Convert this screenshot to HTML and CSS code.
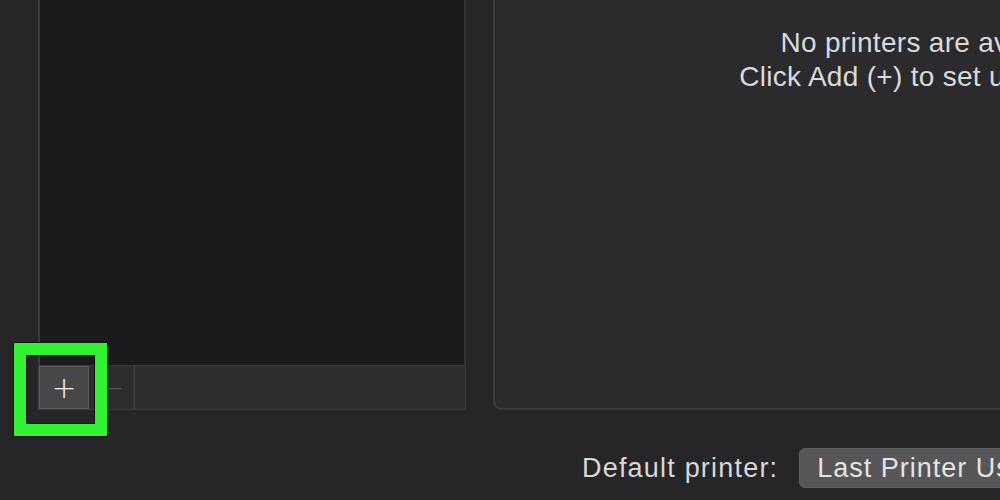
FILE: index.html
```html
<html lang="en">
<head>
<meta charset="utf-8">
<link rel="stylesheet" href="styles.css">
</head>
<body>
    <div class="window">
        <div class="top-row">
            <div class="list-column">
                <div class="printer-list"></div>
                <div class="list-toolbar">
                    <button class="tool-button add">+</button>
                    <button class="tool-button remove">&minus;</button>
                    <div class="tool-fill"></div>
                </div>
            </div>

            <div class="detail-panel">
                <p class="empty-text">No printers are available.<br>Click Add (+) to set up a printer.</p>
            </div>
        </div>

        <div class="bottom-row">
            <span class="default-label">Default printer:</span>
            <div class="popup">Last Printer Used</div>
        </div>
    </div>

    <div class="highlight"></div>
</body>
</html>
```

FILE: styles.css
```css
html, body {
    margin: 0;
    padding: 0;
}

body {
    width: 1000px;
    height: 500px;
    overflow: hidden;
    background-color: #262628;
    font-family: "Liberation Sans", Arial, sans-serif;
    color: #dcdcdc;
    position: relative;
}

.window {
    display: flex;
    flex-direction: column;
}

.top-row {
    display: flex;
    height: 410px;
}

.list-column {
    display: flex;
    flex-direction: column;
    width: 428px;
    margin-left: 38px;
    flex-shrink: 0;
}

.printer-list {
    height: 365px;
    background-color: #1b1b1d;
    border-left: 2px solid #3a3a3c;
    border-right: 2px solid #343436;
    box-sizing: border-box;
}

.list-toolbar {
    display: flex;
    height: 45px;
    background-color: #2d2d2f;
    border: 1px solid #3c3c3e;
    box-sizing: border-box;
}

.tool-button {
    width: 48px;
    height: 100%;
    margin: 0;
    padding: 0;
    border: none;
    border-right: 1px solid #4a4a4c;
    background-color: transparent;
    font-family: "DejaVu Sans", sans-serif;
    font-size: 30px;
    font-weight: 300;
    line-height: 1;
}

.tool-button.add {
    width: 50px;
    background-color: #474749;
    border: 1px solid #5c5c5e;
    color: #f2f2f2;
}

.tool-button.remove {
    width: 46px;
    color: #58585a;
}

.tool-fill {
    flex: 1;
}

.detail-panel {
    width: 894px;
    flex-shrink: 0;
    margin-left: 27px;
    background-color: #2b2b2d;
    border: 2px solid #3b3b3d;
    border-top: none;
    border-radius: 0 0 0 9px;
    box-sizing: border-box;
}

.empty-text {
    margin: 26px 0 0 0;
    text-align: center;
    font-size: 28px;
    line-height: 34px;
    letter-spacing: 0.3px;
    color: #dadada;
}

.bottom-row {
    display: flex;
    align-items: center;
    height: 90px;
    padding-left: 582px;
    padding-top: 26px;
    box-sizing: border-box;
    white-space: nowrap;
}

.default-label {
    flex-shrink: 0;
    font-size: 27px;
    letter-spacing: 1.2px;
    color: #d8d8d8;
}

.popup {
    margin-left: 21px;
    height: 40px;
    width: 300px;
    flex-shrink: 0;
    padding-left: 17px;
    background-color: #565658;
    border: 1px solid #5f5f61;
    border-radius: 6px;
    box-sizing: border-box;
    font-size: 27px;
    line-height: 38px;
    letter-spacing: 1px;
    color: #e4e4e4;
}

/* annotation box drawn over the add button */
.highlight {
    position: absolute;
    left: 14px;
    top: 343px;
    width: 93px;
    height: 93px;
    border: 12px solid #33f233;
    box-sizing: border-box;
    box-shadow: 0 0 0 1px #111, inset 0 0 0 1px #111;
}
```
